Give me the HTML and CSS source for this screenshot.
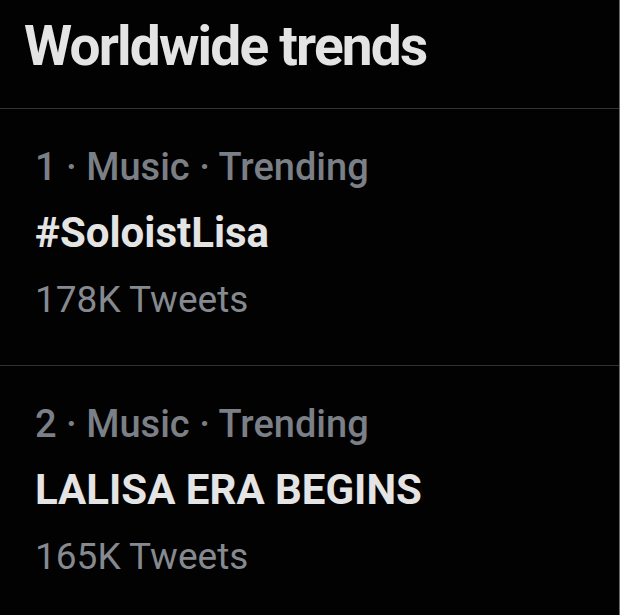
FILE: index.html
```html
<!DOCTYPE html>
<html lang="en">
<head>
  <meta charset="UTF-8">
  <meta name="viewport" content="width=device-width, initial-scale=1.0">
  <title>Worldwide trends</title>
  <link rel="stylesheet" href="styles.css">
</head>
<body>
  <div class="panel">
    <h1 class="panel-title">Worldwide trends</h1>

    <div class="trend">
      <div class="trend-meta">1 · Music · Trending</div>
      <div class="trend-name">#SoloistLisa</div>
      <div class="trend-count">178K Tweets</div>
    </div>

    <div class="trend">
      <div class="trend-meta">2 · Music · Trending</div>
      <div class="trend-name">LALISA ERA BEGINS</div>
      <div class="trend-count">165K Tweets</div>
    </div>
  </div>
</body>
</html>
```

FILE: styles.css
```css
body {
  margin: 0;
  background: #020202;
  font-family: Roboto, "Noto Sans", sans-serif;
  color: #e4e4e4;
}
.panel {
  width: 620px;
  height: 615px;
  box-sizing: border-box;
  border-right: 1px solid #6a6a6a;
  overflow: hidden;
}
.panel-title {
  margin: 0;
  padding: 14px 0 30px 24px;
  font-size: 55px;
  line-height: 64px;
  font-weight: 700;
  letter-spacing: -1.8px;
  border-bottom: 1px solid #2f3336;
}
.trend {
  padding: 26px 0 33px 35px;
  border-bottom: 1px solid #2f3336;
}
.trend-meta {
  font-size: 38px;
  line-height: 65px;
  font-weight: 500;
  color: #7b7f86;
}
.trend-name {
  font-size: 42px;
  line-height: 65px;
  font-weight: 700;
  color: #e4e4e4;
}
.trend-count {
  margin-top: 2px;
  font-size: 37px;
  line-height: 65px;
  color: #868a90;
}
```
